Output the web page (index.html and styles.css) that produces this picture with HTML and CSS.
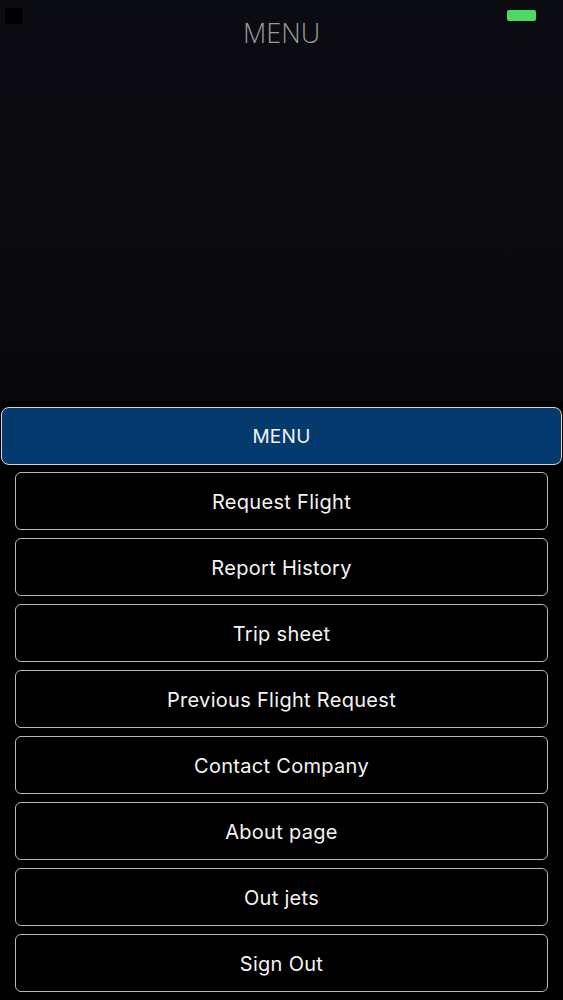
FILE: index.html
```html
<!DOCTYPE html>
<html>
<head>
<meta charset="utf-8">
<link rel="stylesheet" href="styles.css">
</head>
<body>
<div class="top">
  <div class="status">
    <span class="sq"></span>
    <span class="battery"></span>
  </div>
  <div class="title">MENU</div>
</div>
<div class="menu">
  <div class="menu-head">MENU</div>
  <div class="items">
    <div class="item">Request Flight</div>
    <div class="item">Report History</div>
    <div class="item">Trip sheet</div>
    <div class="item">Previous Flight Request</div>
    <div class="item">Contact Company</div>
    <div class="item">About page</div>
    <div class="item">Out jets</div>
    <div class="item">Sign Out</div>
  </div>
</div>
</body>
</html>
```
FILE: styles.css
```css
html, body { margin: 0; padding: 0; background: #000; }
body { width: 563px; height: 1000px; overflow: hidden; font-family: Inter, Roboto, "Liberation Sans", sans-serif; }
.top {
  height: 401px;
  background: linear-gradient(180deg, #0b0b12 0%, #0b0b0f 60%, #08080c 100%);
  position: relative;
}
.status {
  height: 30px;
  display: flex;
  align-items: flex-start;
  justify-content: space-between;
  padding: 8px 27px 0 5px;
  box-sizing: border-box;
}
.sq { width: 18px; height: 16px; background: #000; display: block; }
.battery { width: 29px; height: 11px; margin-top: 2px; background: #4cd964; border-radius: 2px; display: block; }
.title {
  position: absolute;
  top: 14px; left: 0; right: 0;
  text-align: center;
  font-family: "Open Sans", sans-serif;
  font-weight: 300;
  font-size: 27px;
  color: #9c9c9c;
}
.menu { padding: 6px 1px 0 1px; }
.menu-head {
  height: 56px;
  background: #053a6f;
  border: 1.5px solid #d4d4d8;
  border-radius: 8px;
  display: flex;
  align-items: center;
  justify-content: center;
  color: #f2f2f2;
  font-size: 19px;
  font-weight: 400;
  letter-spacing: 0.3px;
}
.items {
  display: flex;
  flex-direction: column;
  gap: 8px;
  padding: 7px 14px 0 14px;
}
.item {
  height: 56px;
  box-sizing: content-box;
  border: 1.5px solid #b8b8b8;
  border-radius: 6px;
  display: flex;
  align-items: center;
  justify-content: center;
  color: #f4f4f4;
  font-size: 20px;
  letter-spacing: 0.3px;
  padding-top: 1px;
  height: 55px;
  background: #000;
}
```
